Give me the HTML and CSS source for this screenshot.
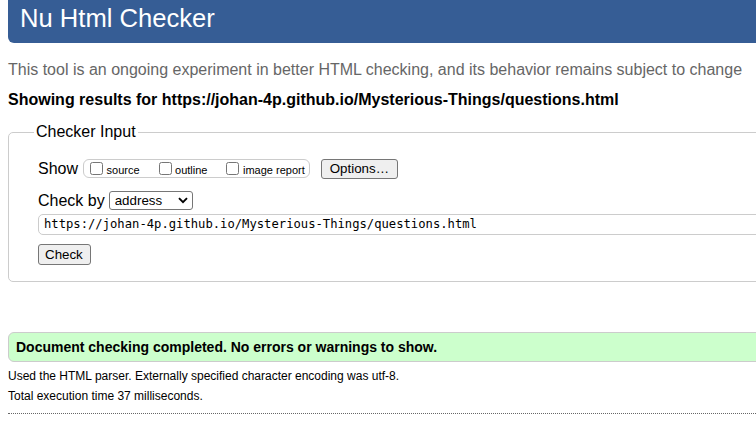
FILE: index.html
```html
<!DOCTYPE html>
<html lang="en">
<head>
<meta charset="utf-8">
<title>Nu Html Checker</title>
<link rel="stylesheet" href="styles.css">
</head>
<body>
<div class="page">
  <h1 class="title">Nu Html Checker</h1>
  <p class="intro">This tool is an ongoing experiment in better HTML checking, and its behavior remains subject to change</p>
  <p class="showing">Showing results for https://johan-4p.github.io/Mysterious-Things/questions.html</p>
  <form class="checker">
    <fieldset class="fs">
      <legend class="legend">Checker Input</legend>
      <div class="row row-show">
        <span class="label">Show</span>
        <span class="group">
          <label class="opt"><input type="checkbox" class="cb"><span class="opt-text">source</span></label>
          <label class="opt"><input type="checkbox" class="cb"><span class="opt-text">outline</span></label>
          <label class="opt"><input type="checkbox" class="cb"><span class="opt-text">image report</span></label>
        </span>
        <button type="button" class="btn btn-options">Options…</button>
      </div>
      <div class="row row-by">
        <span class="label">Check by</span>
        <span class="select-wrap">
          <select class="select"><option>address</option></select>
          <svg class="chev" width="10" height="7" viewBox="0 0 10 7"><path d="M1 1.2 L5 5.2 L9 1.2" fill="none" stroke="#000" stroke-width="1.9"/></svg>
        </span>
      </div>
      <div class="row row-url">
        <input class="url" type="url" value="https://johan-4p.github.io/Mysterious-Things/questions.html">
      </div>
      <div class="row row-check">
        <button type="button" class="btn btn-check">Check</button>
      </div>
    </fieldset>
  </form>
  <p class="success">Document checking completed. No errors or warnings to show.</p>
  <p class="meta">Used the HTML parser. Externally specified character encoding was utf-8.</p>
  <p class="meta meta-time">Total execution time 37 milliseconds.</p>
  <hr class="rule">
</div>
</body>
</html>
```

FILE: styles.css
```css
html, body {
  margin: 0;
  padding: 0;
  background: #fff;
}

body {
  overflow: hidden;
  font-family: "Liberation Sans", Arial, sans-serif;
  color: #000;
}

.page {
  width: 790px;
  margin-left: 8px;
}

.title {
  margin: 0;
  height: 43px;
  box-sizing: border-box;
  padding: 4px 0 0 12px;
  background: #365d95;
  color: #fff;
  font-size: 25.6px;
  line-height: 29px;
  font-weight: normal;
  border-bottom-left-radius: 6px;
}

.intro {
  margin: 18px 0 0;
  font-size: 16px;
  line-height: 18px;
  color: #666;
}

.showing {
  margin: 12px 0 0;
  font-size: 16px;
  line-height: 18px;
  font-weight: bold;
}

.checker {
  margin: 14px 0 0;
}

.fs {
  margin: 0;
  min-width: 0;
  border: 1px solid #ccc;
  border-radius: 5px;
  padding: 17px 0 16px 29px;
}

.legend {
  font-size: 16px;
  line-height: 18px;
  padding: 0 2px;
  margin-left: -4px;
}

.row {
  display: flex;
  align-items: center;
}

.row-show {
  height: 21px;
}

.label {
  font-size: 16px;
  line-height: 18px;
}

.group {
  display: inline-flex;
  align-items: center;
  gap: 19px;
  height: 17px;
  margin-left: 5px;
  padding: 0 4px 0 6px;
  border: 1px solid #ccc;
  border-radius: 6px;
}

.opt {
  display: inline-flex;
  align-items: center;
  gap: 3.5px;
  font-size: 11px;
  line-height: 13px;
}

.opt-text {
  padding-top: 3px;
}

.cb {
  margin: 0;
  width: 13px;
  height: 13px;
}

.btn {
  font-family: "Liberation Sans", Arial, sans-serif;
  font-size: 13.33px;
  line-height: 15px;
  color: #000;
  background: #efefef;
  border: 1px solid #767676;
  border-radius: 3px;
  padding: 2px 6px;
  margin: 0;
}

.btn-options {
  margin-left: 11px;
  padding: 1px 8px 2px;
}

.btn-check {
  padding: 2px 7px 2px 6px;
}

.row-by {
  margin-top: 12px;
  height: 19px;
}

.select-wrap {
  position: relative;
  display: inline-block;
  margin-left: 4px;
  height: 19px;
}

.select {
  appearance: none;
  -webkit-appearance: none;
  box-sizing: border-box;
  width: 84px;
  height: 19px;
  margin: 0;
  padding: 0 0 0 5px;
  border: 1px solid #767676;
  border-radius: 3px;
  background: #fff;
  font-family: "Liberation Sans", Arial, sans-serif;
  font-size: 13.33px;
  color: #000;
}

.chev {
  position: absolute;
  left: 69px;
  top: 6px;
}

.row-url {
  margin-top: 3.5px;
}

.url {
  box-sizing: border-box;
  width: 100%;
  height: 21px;
  margin: 0;
  padding: 0 5px;
  border: 1px solid #ccc;
  border-radius: 5px;
  font-family: "DejaVu Sans Mono", "Liberation Mono", monospace;
  font-size: 12.2px;
  color: #000;
  background: #fff;
}

.row-check {
  margin-top: 9px;
}

.success {
  margin: 50px 0 0;
  padding: 6px 6px 6px 7px;
  border: 1px solid #ccc;
  border-radius: 6px 0 0 6px;
  background: #ccffcc;
  font-size: 14px;
  line-height: 16px;
  font-weight: bold;
}

.meta {
  margin: 7px 0 0;
  font-size: 12px;
  line-height: 14px;
}

.meta-time {
  margin-top: 6.7px;
}

.rule {
  margin: 9.5px 0 0;
  height: 0;
  border: 0;
  border-top: 1px dotted #666;
}
```
